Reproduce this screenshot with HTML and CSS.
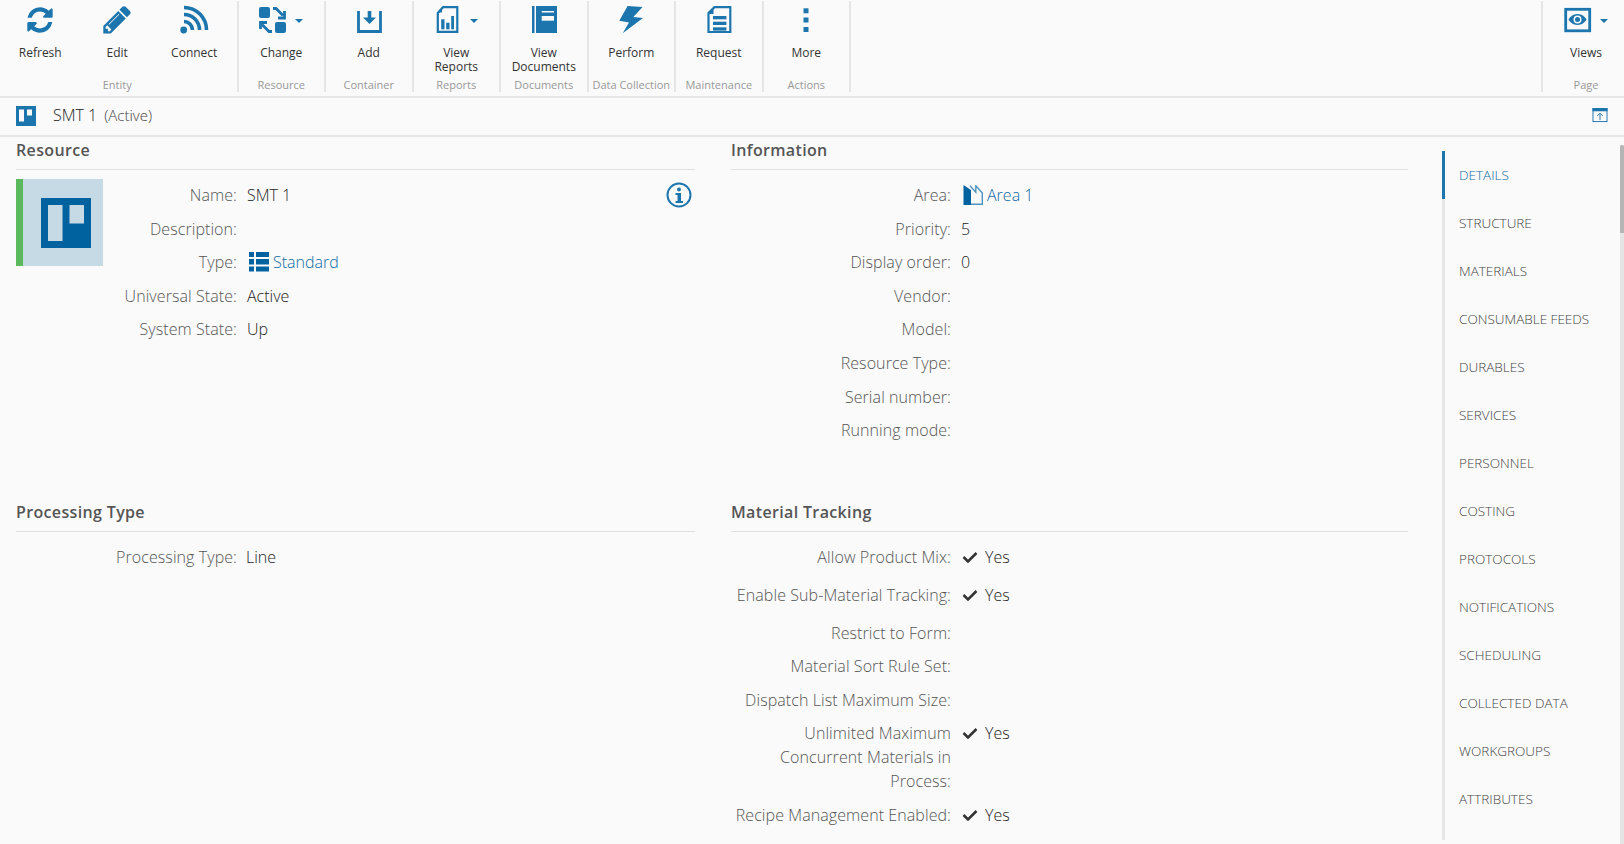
FILE: index.html
```html
<!DOCTYPE html>
<html lang="en">
<head>
    <meta charset="UTF-8">
    <title>SMT 1</title>
    <link rel="stylesheet" href="styles.css">
</head>
<body>

<div class="toolbar">
    <div class="group first">
        <div class="buttons">
            <div class="btn wide">
                <svg class="icon" viewBox="0 0 32 32"><g transform="translate(3.3 2.3) scale(.0165)"><path d="M1511 928q0 5-1 7-64 268-268 434.5t-478 166.5q-146 0-282.5-55t-243.5-157l-129 129q-19 19-45 19t-45-19-19-45v-448q0-26 19-45t45-19h448q26 0 45 19t19 45-19 45l-137 137q71 66 161 102t187 36q134 0 250-65t186-179q11-17 53-117 8-23 30-23h192q13 0 22.5 9.5t9.5 22.5zm25-800v448q0 26-19 45t-45 19h-448q-26 0-45-19t-19-45 19-45l138-138q-148-137-349-137-134 0-250 65t-186 179q-11 17-53 117-8 23-30 23h-199q-13 0-22.5-9.5t-9.5-22.5v-7q65-268 270-434.5t480-166.5q146 0 284 55.5t245 156.5l130-129q19-19 45-19t45 19 19 45z"/></g></svg>
                <span>Refresh</span>
            </div>
            <div class="btn wide">
                <svg class="icon" viewBox="0 0 32 32"><g transform="translate(2.3 .8) scale(.018)"><path d="M363 1408l91-91-235-235-91 91v107h128v128h107zm523-928q0-22-22-22-10 0-17 7l-542 542q-7 7-7 17 0 22 22 22 10 0 17-7l542-542q7-7 7-17zm-54-192l416 416-832 832h-416v-416zm683 96q0 53-37 90l-166 166-416-416 166-165q36-38 90-38 53 0 91 38l235 234q37 39 37 91z"/></g></svg>
                <span>Edit</span>
            </div>
            <div class="btn wide">
                <svg class="icon" viewBox="0 0 32 32"><circle cx="5.700" cy="25" r="3.400"/><g class="line"><path d="M6 16.500a8.500 8.500 0 0 1 8.500 8.500"/><path d="M6 9.500a15.500 15.500 0 0 1 15.500 15.500"/><path d="M6 2.500a22.500 22.500 0 0 1 22.500 22.500"/></g></svg>
                <span>Connect</span>
            </div>
        </div>
        <div class="group-name">Entity</div>
    </div>
    <div class="group">
        <div class="buttons">
            <div class="btn">
                <div class="icon-row">
                    <svg class="icon" viewBox="0 0 32 32"><rect x="0" y="2" width="11" height="11" rx="2"/><rect x="16" y="17" width="11" height="11" rx="2"/><g class="line mid"><path d="M14 3.500h3l7 7"/><path d="M25.500 6v7H19"/><path d="M13 26.500h-3l-7-7"/><path d="M1.500 24v-6.500H8"/></g></svg>
                    <i class="caret"></i>
                </div>
                <span>Change</span>
            </div>
        </div>
        <div class="group-name">Resource</div>
    </div>
    <div class="group">
        <div class="buttons">
            <div class="btn">
                <svg class="icon" viewBox="0 0 32 32"><path class="line mid" d="M5.500 6v20.500h22V6"/><path d="M14.700 6h3.600v6.500H23L16.500 19 10 12.500h4.700z"/></svg>
                <span>Add</span>
            </div>
        </div>
        <div class="group-name">Container</div>
    </div>
    <div class="group">
        <div class="buttons">
            <div class="btn">
                <div class="icon-row">
                    <svg class="icon" viewBox="0 0 32 32"><path class="line thin" d="M9 2.200h14.300v24.700H3.800V8z"/><path d="M8 3v4.500H3.500z"/><rect x="7.200" y="14.300" width="3.300" height="10"/><rect x="12.200" y="17.700" width="3.300" height="6.600"/><rect x="17.200" y="11" width="2.800" height="13.300"/></svg>
                    <i class="caret"></i>
                </div>
                <span>View<br>Reports</span>
            </div>
        </div>
        <div class="group-name">Reports</div>
    </div>
    <div class="group">
        <div class="buttons">
            <div class="btn">
                <svg class="icon" viewBox="0 0 32 32"><rect x="4" y="1" width="2.500" height="27"/><rect x="8" y="1" width="21" height="27"/><rect class="cut" x="13.700" y="6" width="12.300" height="1.500"/><rect class="cut" x="13.700" y="11" width="12.300" height="4.700"/></svg>
                <span>View<br>Documents</span>
            </div>
        </div>
        <div class="group-name">Documents</div>
    </div>
    <div class="group">
        <div class="buttons">
            <div class="btn">
                <svg class="icon" viewBox="0 0 32 32"><path d="M12.600 1l15 1-9.300 10 9.700 1L7.700 28.300 14 17.500 4.300 15.700z"/></svg>
                <span>Perform</span>
            </div>
        </div>
        <div class="group-name">Data Collection</div>
    </div>
    <div class="group">
        <div class="buttons">
            <div class="btn">
                <svg class="icon" viewBox="0 0 32 32"><path class="line thin" d="M11.500 2.100h15.800V27H5.500V8z"/><path d="M10.500 3.500V9H5z"/><rect x="10" y="11" width="13.400" height="3.300"/><rect x="10" y="16.700" width="13.400" height="3.300"/><rect x="10" y="22.300" width="13.400" height="3.300"/></svg>
                <span>Request</span>
            </div>
        </div>
        <div class="group-name">Maintenance</div>
    </div>
    <div class="group">
        <div class="buttons">
            <div class="btn">
                <svg class="icon" viewBox="0 0 32 32"><rect x="13.500" y="3.300" width="5" height="5"/><rect x="13.500" y="12.500" width="5" height="5"/><rect x="13.500" y="22" width="5" height="5"/></svg>
                <span>More</span>
            </div>
        </div>
        <div class="group-name">Actions</div>
    </div>
    <div class="group page">
        <div class="buttons">
            <div class="btn">
                <div class="icon-row">
                    <svg class="icon" viewBox="0 0 32 32"><rect class="line mid" x="1.700" y="4.300" width="24" height="21.500"/><path d="M13.500 9c4.500 0 7.500 3 9 5.500-1.500 2.500-4.500 5.500-9 5.500s-7.500-3-9-5.500c1.500-2.500 4.500-5.500 9-5.500z"/><circle class="cut" cx="13.500" cy="14.500" r="4"/><circle cx="13.500" cy="14.500" r="2.500"/></svg>
                    <i class="caret"></i>
                </div>
                <span>Views</span>
            </div>
        </div>
        <div class="group-name">Page</div>
    </div>
</div>

<div class="titlebar">
    <svg class="title-icon" viewBox="0 0 20 20"><rect width="20" height="20"/><rect class="cut" x="3" y="3.500" width="5" height="12"/><rect class="cut" x="11" y="3.500" width="5" height="6"/></svg>
    <span class="title-name">SMT 1</span>
    <span class="title-state">(Active)</span>
    <svg class="collapse" viewBox="0 0 16 16"><rect class="box" x=".5" y=".5" width="15" height="14"/><rect x="0" y="0" width="16" height="3.500"/><path class="arrow" d="M8 13V6M5 8.500L8 5.500l3 3"/></svg>
</div>

<div class="content">
    <div class="main">
        <section class="section top-row">
            <h3>Resource</h3>
            <div class="resource-body">
                <div class="thumb">
                    <svg viewBox="0 0 50 50"><rect width="50" height="50"/><rect class="pale" x="7" y="7" width="14.500" height="36"/><rect class="pale" x="28.500" y="7" width="14.500" height="18.500"/></svg>
                </div>
                <div class="fields narrow">
                    <div class="field"><label>Name:</label><div>SMT 1</div></div>
                    <div class="field"><label>Description:</label><div></div></div>
                    <div class="field"><label>Type:</label><div><a><svg class="link-icon" viewBox="0 0 20 20"><rect x="0" y="0" width="5" height="5"/><rect x="7" y="0" width="13" height="5"/><rect x="0" y="7" width="5" height="5.500"/><rect x="7" y="7" width="13" height="5.500"/><rect x="0" y="14.500" width="5" height="5"/><rect x="7" y="14.500" width="13" height="5"/></svg>Standard</a></div></div>
                    <div class="field"><label>Universal State:</label><div>Active</div></div>
                    <div class="field"><label>System State:</label><div>Up</div></div>
                </div>
                <svg class="info" viewBox="0 0 26 26"><circle cx="13" cy="13" r="11.500"/><circle class="dot" cx="13" cy="7.500" r="2"/><path class="dot" d="M9.500 11h5.500v8h2v2H9.500v-2h2v-6h-2z"/></svg>
            </div>
        </section>
        <section class="section top-row">
            <h3>Information</h3>
            <div class="fields">
                <div class="field"><label>Area:</label><div><a><svg class="link-icon" viewBox="0 0 20 20"><path class="area" d="M7 .7l5.800 6.500V.7l6.500 7.300v11.300H7"/><path d="M.5 0l7.500 5v15H.5z"/></svg>Area 1</a></div></div>
                <div class="field"><label>Priority:</label><div>5</div></div>
                <div class="field"><label>Display order:</label><div>0</div></div>
                <div class="field"><label>Vendor:</label><div></div></div>
                <div class="field"><label>Model:</label><div></div></div>
                <div class="field"><label>Resource Type:</label><div></div></div>
                <div class="field"><label>Serial number:</label><div></div></div>
                <div class="field"><label>Running mode:</label><div></div></div>
            </div>
        </section>
        <section class="section">
            <h3>Processing Type</h3>
            <div class="fields">
                <div class="field left"><label>Processing Type:</label><div>Line</div></div>
            </div>
        </section>
        <section class="section">
            <h3>Material Tracking</h3>
            <div class="fields">
                <div class="field tall"><label>Allow Product Mix:</label><div class="yes"><svg class="check" viewBox="0 0 16 12"><path d="M1.500 6l4.500 4.500L14.500 2"/></svg>Yes</div></div>
                <div class="field tall"><label>Enable Sub-Material Tracking:</label><div class="yes"><svg class="check" viewBox="0 0 16 12"><path d="M1.500 6l4.500 4.500L14.500 2"/></svg>Yes</div></div>
                <div class="field"><label>Restrict to Form:</label><div></div></div>
                <div class="field"><label>Material Sort Rule Set:</label><div></div></div>
                <div class="field"><label>Dispatch List Maximum Size:</label><div></div></div>
                <div class="field"><label>Unlimited Maximum Concurrent Materials in Process:</label><div class="yes"><svg class="check" viewBox="0 0 16 12"><path d="M1.500 6l4.500 4.500L14.500 2"/></svg>Yes</div></div>
                <div class="field tall"><label>Recipe Management Enabled:</label><div class="yes"><svg class="check" viewBox="0 0 16 12"><path d="M1.500 6l4.500 4.500L14.500 2"/></svg>Yes</div></div>
            </div>
        </section>
    </div>
    <nav class="tabs">
        <a class="tab active">Details</a>
        <a class="tab">Structure</a>
        <a class="tab">Materials</a>
        <a class="tab">Consumable Feeds</a>
        <a class="tab">Durables</a>
        <a class="tab">Services</a>
        <a class="tab">Personnel</a>
        <a class="tab">Costing</a>
        <a class="tab">Protocols</a>
        <a class="tab">Notifications</a>
        <a class="tab">Scheduling</a>
        <a class="tab">Collected Data</a>
        <a class="tab">Workgroups</a>
        <a class="tab">Attributes</a>
    </nav>
    <div class="scroll-track"><div class="scroll-thumb"></div></div>
</div>

</body>
</html>
```

FILE: styles.css
```css
* {
    box-sizing: border-box;
}

html, body {
    height: 100%;
}

body {
    margin: 0;
    overflow: hidden;
    font-family: "Open Sans", sans-serif;
    background-color: #fafafa;
    color: #333;
}

svg {
    fill: #1c75ad;
}

.line {
    fill: none;
    stroke: #1c75ad;
    stroke-width: 3.600;
}

.line.mid {
    stroke-width: 2.800;
}

.line.thin {
    stroke-width: 2.200;
}

.cut {
    fill: #fafafa;
}

/* toolbar */
.toolbar {
    display: flex;
    height: 98px;
    padding-top: 1px;
    border-bottom: 2px solid #e6e6e6;
}

.group {
    display: flex;
    flex-direction: column;
    align-self: flex-start;
    height: 91px;
    border-right: 2px solid #e6e6e6;
}

.group.first {
    width: 238.500px;
    padding: 0 3.500px 0 1.500px;
}

.group.page {
    margin-left: auto;
    width: 83px;
    padding-left: 5px;
    border-right: none;
    border-left: 2px solid #e6e6e6;
}

.buttons {
    display: flex;
    justify-content: center;
    flex: 1;
}

.btn {
    width: 85.500px;
    display: flex;
    flex-direction: column;
    align-items: center;
    font-size: 12px;
    line-height: 14px;
    color: #333;
    text-align: center;
}

.btn.wide {
    width: 77px;
}

.icon {
    display: block;
    flex: none;
    width: 32px;
    height: 32px;
    margin: 4px 0 9px;
}

.icon-row {
    display: flex;
    align-items: flex-start;
}

.caret {
    width: 0;
    height: 0;
    margin: 18px 0 0 4px;
    border-left: 4px solid transparent;
    border-right: 4px solid transparent;
    border-top: 4px solid #1c75ad;
}

.group-name {
    font-size: 11px;
    line-height: 14px;
    color: #999;
    text-align: center;
    white-space: nowrap;
}

/* title bar */
.titlebar {
    display: flex;
    align-items: center;
    height: 39px;
    padding: 0 16px 3px;
    border-bottom: 2px solid #e6e6e6;
    font-size: 16px;
    font-weight: 300;
}

.title-icon {
    width: 20px;
    height: 20px;
    margin: 1px 17px 0 0;
}

.title-name {
    color: #222;
}

.title-state {
    margin-left: 7px;
    font-size: 15px;
    color: #444;
}

.collapse {
    width: 16px;
    height: 15px;
    margin: 1px 0 0 auto;
}

.collapse .box {
    fill: none;
    stroke: #1c75ad;
}

.collapse .arrow {
    fill: none;
    stroke: #1c75ad;
    stroke-width: 1;
}

/* details */
.content {
    position: relative;
    display: flex;
    height: 707px;
}

.main {
    display: grid;
    grid-template-columns: 679px 677px;
    grid-auto-rows: min-content;
    column-gap: 36px;
    padding-left: 16px;
    width: 1442px;
}

.section.top-row {
    height: 362px;
}

h3 {
    margin: 0;
    height: 33px;
    padding-top: 1px;
    font-size: 16px;
    line-height: 24px;
    font-weight: 600;
    color: #555;
    letter-spacing: .35px;
    border-bottom: 1px solid #e0e0e0;
}

.resource-body {
    position: relative;
    display: flex;
}

.thumb {
    flex: none;
    width: 87px;
    height: 87px;
    margin-top: 9px;
    padding-left: 5px;
    display: flex;
    align-items: center;
    justify-content: center;
    background-color: #c6dae6;
    border-left: 7px solid #5cb85c;
}

.thumb svg {
    width: 50px;
    height: 50px;
    fill: #00629f;
}

.thumb .pale {
    fill: #c6dae6;
}

.info {
    position: absolute;
    top: 12px;
    right: 3px;
    width: 26px;
    height: 26px;
    fill: none;
    stroke: #1c75ad;
    stroke-width: 2;
}

.info .dot {
    fill: #1c75ad;
    stroke: none;
}

.fields {
    padding-top: 8px;
    flex: 1;
}

.field {
    display: grid;
    grid-template-columns: 220px 1fr;
    column-gap: 10px;
    padding: 5px 0 4.600px;
    font-size: 16px;
    font-weight: 300;
    line-height: 24px;
    color: #222;
}

.fields.narrow .field {
    grid-template-columns: 134px 1fr;
}

.field.left {
    grid-template-columns: 221px 1fr;
    column-gap: 9px;
}

.field.tall {
    padding-bottom: 8.800px;
}

.field label {
    text-align: right;
    letter-spacing: .08px;
    color: #555;
}

.field a {
    display: flex;
    align-items: center;
    color: #0f6aa5;
}

.link-icon {
    width: 20px;
    height: 20px;
    margin: 0 4px 0 2px;
    fill: #00629f;
}

.link-icon .area {
    fill: none;
    stroke: #4f94c0;
    stroke-width: 1.400;
}

.yes {
    display: flex;
    align-items: flex-start;
}

.check {
    width: 16px;
    height: 12px;
    margin: 6px 7px 0 1px;
    fill: none;
    stroke: #333;
    stroke-width: 2.500;
}

/* tabs */
.tabs {
    display: flex;
    flex-direction: column;
    margin-top: 14px;
    height: 689px;
    width: 170px;
    border-left: 3px solid #e6e6e6;
}

.tab {
    flex: none;
    height: 48px;
    margin-left: -3px;
    padding-left: 14px;
    border-left: 3px solid transparent;
    font-size: 13.500px;
    font-weight: 300;
    line-height: 48px;
    color: #444;
    text-transform: uppercase;
    white-space: nowrap;
}

.tab.active {
    color: #0f6aa5;
    border-left-color: #1c75ad;
}

.scroll-track {
    position: absolute;
    top: 8px;
    right: 0;
    bottom: 0;
    width: 4px;
    background-color: #e4e4e4;
}

.scroll-thumb {
    height: 88px;
    background-color: #b5b5b5;
    border-radius: 2px 2px 0 0;
}
```
